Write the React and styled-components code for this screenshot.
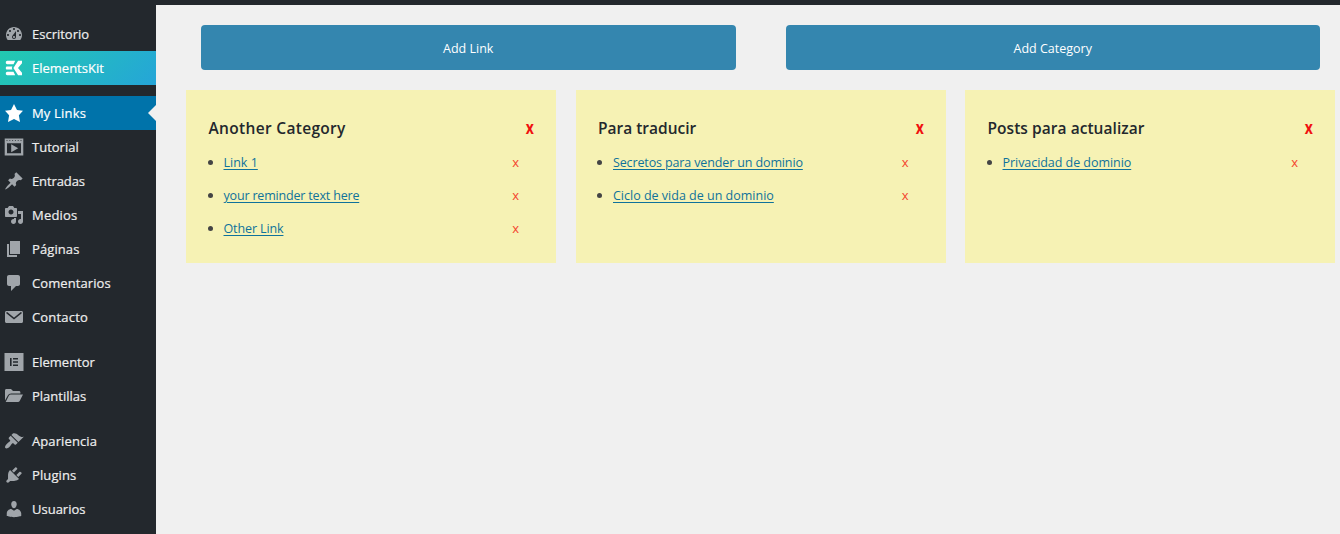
import React from "react";
import styled, { createGlobalStyle } from "styled-components";

const GlobalStyle = createGlobalStyle`
  *, *::before, *::after { box-sizing: border-box; }
  html, body { margin: 0; padding: 0; }
  body {
    background: #f0f0f0;
    color: #3c434a;
    font-family: "Segoe UI", "Open Sans", "Noto Sans", sans-serif;
    font-size: 13px;
    overflow: hidden;
  }
`;

const Page = styled.div`
  display: flex;
  flex-direction: column;
  height: 534px;
  overflow: hidden;
`;

const TopBar = styled.div`
  flex: none;
  height: 5px;
  background: #23282d;
`;

const Body = styled.div`
  flex: 1;
  display: flex;
  min-height: 0;
`;

const Sidebar = styled.nav`
  flex: none;
  width: 156px;
  padding-top: 12px;
  background: #23282d;
  overflow: hidden;
`;

const MenuItem = styled.a`
  display: flex;
  align-items: center;
  position: relative;
  height: 34px;
  margin-top: ${(p) => (p.$spaced ? "11px" : "0")};
  padding-left: 4px;
  gap: 8px;
  color: ${(p) => (p.$tone ? "#fff" : "#eee")};
  background: ${(p) =>
    p.$tone === "kit"
      ? "linear-gradient(135deg, #22cab0 0%, #25a5d8 100%)"
      : p.$tone === "current"
      ? "#0073aa"
      : "transparent"};
  font-size: 13px;
  line-height: 18px;
  text-decoration: none;

  svg {
    flex: none;
    width: 20px;
    height: 20px;
    fill: ${(p) => (p.$tone ? "#fff" : "#a0a5aa")};
  }
`;

const MenuLabel = styled.span`
  letter-spacing: ${(p) => p.$tracking || 0}px;
  white-space: nowrap;
  -webkit-text-stroke: 0.2px currentColor;
`;

const Pointer = styled.span`
  position: absolute;
  right: 0;
  top: 9px;
  border: 8px solid transparent;
  border-left-width: 0;
  border-right-color: #f0f0f0;
`;

const Content = styled.main`
  flex: 1;
  min-width: 0;
  padding: 20px 5px 0 30px;
`;

const Actions = styled.div`
  display: flex;
  gap: 50px;
  padding: 0 15px;
`;

const ActionButton = styled.button`
  flex: 1;
  height: 45px;
  padding: 1px 0 0;
  border: 0;
  border-radius: 4px;
  background: #3486af;
  color: #fff;
  font: inherit;
  font-size: 12.5px;
`;

const Cards = styled.div`
  display: grid;
  grid-template-columns: repeat(3, 370px);
  justify-content: space-between;
  margin-top: 20px;
`;

const Card = styled.section`
  height: 173px;
  padding: 26px 22px 0 22.5px;
  background: #f6f2b4;
`;

const CardHeader = styled.header`
  display: flex;
  align-items: center;
  justify-content: space-between;
  height: 24px;
`;

const CardTitle = styled.h2`
  margin: 0;
  color: #23282d;
  font-size: 15.5px;
  font-weight: 600;
  line-height: 24px;
  letter-spacing: ${(p) => p.$tracking || 0}px;
`;

const RemoveCategory = styled.span`
  color: #f01010;
  font-size: 17px;
  font-weight: 700;
  line-height: 24px;
  transform: scaleX(0.82);
  transform-origin: right center;
`;

const LinkList = styled.ul`
  margin: 10px 0 0;
  padding: 0 15px 0 0;
  list-style: none;
`;

const LinkRow = styled.li`
  display: flex;
  align-items: center;
  height: 25px;
  margin-bottom: 8px;

  &::before {
    content: "";
    width: 5px;
    height: 5px;
    margin-right: 11px;
    margin-left: -1px;
    border-radius: 50%;
    background: #444;
  }
`;

const TextLink = styled.a`
  flex: none;
  color: #0f729b;
  font-size: 12.5px;
  text-decoration: underline;
  text-underline-offset: 2px;
  text-decoration-thickness: 1px;
  letter-spacing: ${(p) => p.$tracking || 0}px;
`;

const RemoveLink = styled.span`
  margin-left: auto;
  padding-bottom: 2px;
  color: #f4442e;
  font-size: 13px;
`;

const ICONS = {
  dashboard: (
    <path d="M3.76 16h12.48c1.1-1.37 1.76-3.11 1.76-5 0-4.42-3.58-8-8-8s-8 3.58-8 8c0 1.89.66 3.63 1.76 5zM10 4c.55 0 1 .45 1 1s-.45 1-1 1-1-.45-1-1 .45-1 1-1zM6 6c.55 0 1 .45 1 1s-.45 1-1 1-1-.45-1-1 .45-1 1-1zm8 0c.55 0 1 .45 1 1s-.45 1-1 1-1-.45-1-1 .45-1 1-1zm-5.37 5.55L12 7v6c0 1.1-.9 2-2 2s-2-.9-2-2c0-.57.24-1.08.63-1.45zM4 10c.55 0 1 .45 1 1s-.45 1-1 1-1-.45-1-1 .45-1 1-1zm12 0c.55 0 1 .45 1 1s-.45 1-1 1-1-.45-1-1 .45-1 1-1zm-5 3c0-.55-.45-1-1-1s-1 .45-1 1 .45 1 1 1 1-.45 1-1z" />
  ),
  kit: (
    <path d="M3.300 2.800H11.200L9.500 6.200H3.300C2.400 6.200 1.800 5.500 1.800 4.500S2.400 2.800 3.300 2.800zM3 8.400h5.400L7.800 10l.6 1.600H3c-.7 0-1.200-.7-1.200-1.600S2.300 8.400 3 8.400zM3.300 13.800h6.200l1.700 3.400H3.300c-.9 0-1.500-.7-1.500-1.700s.6-1.700 1.500-1.700zM14.100 2.800H18v2.400L14 10l4 4.800v2.400h-3.900L9.400 10z" />
  ),
  star: <path d="M10 1l3 6 6 .75-4.120 4.620L16 19l-6-3-6 3 1.130-6.630L1 7.750 7 7z" />,
  video: (
    <path
      fillRule="evenodd"
      d="M.7 1.500h18.600v17H.7zM3 6.200v10h14v-10zM2.500 3.200v.8h1v-.8zM5.300 3.200v.8h1v-.8zM8.100 3.200v.8h1v-.8zM10.900 3.200v.8h1v-.8zM13.700 3.200v.8h1v-.8zM16.500 3.200v.8h1v-.8zM7.200 7.200l7 4-7 4z"
    />
  ),
  pin: (
    <path d="M10.440 3.020l1.820-1.820 6.360 6.350-1.830 1.820c-1.050-.68-2.480-.57-3.410.36l-.75.75c-.92.93-1.040 2.350-.35 3.410l-1.830 1.820-2.410-2.410-2.800 2.790c-.42.42-3.380 2.710-3.800 2.290s1.860-3.390 2.280-3.810l2.790-2.790L4.100 9.360l1.830-1.820c1.050.69 2.480.57 3.400-.36l.75-.75c.93-.92 1.050-2.350.36-3.410z" />
  ),
  media: (
    <path d="M13 11V4c0-.55-.45-1-1-1h-1.670L9 1H5L3.670 3H2c-.55 0-1 .45-1 1v7c0 .55.45 1 1 1h10c.55 0 1-.45 1-1zM7 4.500c1.380 0 2.500 1.120 2.500 2.500S8.380 9.500 7 9.500 4.500 8.380 4.500 7 5.620 4.500 7 4.500zM14 6h5v10.500c0 1.380-1.120 2.500-2.500 2.500S14 17.880 14 16.500s1.120-2.500 2.500-2.500c.17 0 .34.02.5.05V9h-3V6zm-4 8.050V13h2v3.500c0 1.380-1.120 2.500-2.500 2.500S7 17.880 7 16.500 8.120 14 9.500 14c.17 0 .34.02.5.05z" />
  ),
  pages: <path d="M6 15V2h10v13H6zm-1 1h8v2H3V5h2v11z" />,
  comments: (
    <path d="M5 2h9c1.100 0 2 .9 2 2v7c0 1.100-.9 2-2 2h-2l-5 5v-5H5c-1.100 0-2-.9-2-2V4c0-1.100.9-2 2-2z" />
  ),
  mail: (
    <>
      <path d="M2.500 4h15c.83 0 1.500.67 1.500 1.500v9c0 .83-.67 1.500-1.500 1.500h-15c-.83 0-1.500-.67-1.500-1.500v-9C1 4.670 1.670 4 2.500 4z" />
      <path d="M3 5.900l7 5.700 7-5.700" style={{ fill: "none" }} stroke="#23282d" strokeWidth="1.500" strokeLinecap="round" />
    </>
  ),
  elementor: (
    <path
      fillRule="evenodd"
      d="M.5 1h19v18H.5zM6 6v8h1.600V6zM9 6v1.600h5V6zM9 9.200v1.600h5V9.200zM9 12.400V14h5v-1.600z"
    />
  ),
  folder: (
    <path d="M1 14.500V4.500C1 3.700 1.600 3 2.400 3H7l2 2h6c.8 0 1.400.6 1.400 1.400V7.500H7.200c-1.600 0-2.700.7-3.400 2zM1.700 16l3.100-6.200c.4-.8 1-1.200 1.900-1.200H19l-3.200 6.200c-.4.800-1 1.200-1.900 1.200z" />
  ),
  brush: (
    <path d="M14.480 11.060L7.410 3.990l1.500-1.500c.5-.56 2.300-.47 3.510.32 1.210.8 1.430 1.280 2.910 2.100 1.180.64 2.450 1.260 4.450.85zm-.71.71L6.700 4.700 4.930 6.470c-.39.39-.39 1.020 0 1.410l1.060 1.060c.39.39.39 1.030 0 1.420-.6.6-1.430 1.110-2.210 1.690-.35.26-.7.53-1.010.84C1.430 14.230.4 16.080 1.400 17.070c.99 1 2.840-.03 4.180-1.360.31-.31.58-.66.85-1.020.57-.78 1.080-1.610 1.690-2.210.39-.39 1.020-.39 1.410 0l1.060 1.060c.39.39 1.020.39 1.410 0z" />
  ),
  plug: (
    <path d="M13.110 4.360L9.870 7.600 8 5.730l3.240-3.240c.35-.34 1.050-.2 1.560.32.52.51.66 1.210.31 1.550zm-8 1.770l.91-1.120 9.010 9.010-1.190.84c-.71.71-2.630 1.160-3.820 1.160H6.140L4.900 17.260c-.59.59-1.540.59-2.120 0-.59-.58-.59-1.530 0-2.120l1.240-1.240v-3.880c0-1.130.4-3.190 1.090-3.890zm7.260 3.970l3.240-3.240c.34-.35 1.040-.21 1.550.31.52.51.66 1.210.31 1.550l-3.240 3.250z" />
  ),
  user: (
    <path d="M10 9.250c-2.270 0-2.730-3.440-2.730-3.440C7 4.020 7.820 2 9.970 2c2.160 0 2.980 2.020 2.710 3.810 0 0-.41 3.440-2.680 3.440zm0 2.570L12.720 10c2.390 0 4.520 2.330 4.520 4.530v2.490s-3.650 1.130-7.240 1.130c-3.650 0-7.240-1.130-7.240-1.130v-2.490c0-2.250 1.940-4.480 4.470-4.480z" />
  ),
};

const MENU = [
  { label: "Escritorio", icon: "dashboard" },
  { label: "ElementsKit", icon: "kit", tone: "kit" },
  { label: "My Links", icon: "star", tone: "current", spaced: true, tracking: 0.18 },
  { label: "Tutorial", icon: "video" },
  { label: "Entradas", icon: "pin", tracking: -0.1 },
  { label: "Medios", icon: "media", tracking: 0.2 },
  { label: "Páginas", icon: "pages", tracking: 0.1 },
  { label: "Comentarios", icon: "comments", tracking: 0.08 },
  { label: "Contacto", icon: "mail", tracking: 0.18 },
  { label: "Elementor", icon: "elementor", spaced: true },
  { label: "Plantillas", icon: "folder" },
  { label: "Apariencia", icon: "brush", spaced: true, tracking: 0.1 },
  { label: "Plugins", icon: "plug", tracking: 0.12 },
  { label: "Usuarios", icon: "user" },
];

const CATEGORIES = [
  {
    title: "Another Category",
    tracking: 0.32,
    links: [
      { text: "Link 1" },
      { text: "your reminder text here", tracking: -0.18 },
      { text: "Other Link", tracking: -0.12 },
    ],
  },
  {
    title: "Para traducir",
    links: [
      { text: "Secretos para vender un dominio", tracking: -0.13 },
      { text: "Ciclo de vida de un dominio" },
    ],
  },
  {
    title: "Posts para actualizar",
    tracking: 0.05,
    links: [{ text: "Privacidad de dominio", tracking: -0.05 }],
  },
];

export default function App() {
  return (
    <>
      <GlobalStyle />
      <Page>
        <TopBar />
        <Body>
          <Sidebar>
            {MENU.map((m) => (
              <MenuItem key={m.label} $tone={m.tone} $spaced={m.spaced}>
                <svg viewBox="0 0 20 20">{ICONS[m.icon]}</svg>
                <MenuLabel $tracking={m.tracking}>{m.label}</MenuLabel>
                {m.tone === "current" && <Pointer />}
              </MenuItem>
            ))}
          </Sidebar>
          <Content>
            <Actions>
              <ActionButton>Add Link</ActionButton>
              <ActionButton>Add Category</ActionButton>
            </Actions>
            <Cards>
              {CATEGORIES.map((c) => (
                <Card key={c.title}>
                  <CardHeader>
                    <CardTitle $tracking={c.tracking}>{c.title}</CardTitle>
                    <RemoveCategory>x</RemoveCategory>
                  </CardHeader>
                  <LinkList>
                    {c.links.map((l) => (
                      <LinkRow key={l.text}>
                        <TextLink $tracking={l.tracking}>{l.text}</TextLink>
                        <RemoveLink>x</RemoveLink>
                      </LinkRow>
                    ))}
                  </LinkList>
                </Card>
              ))}
            </Cards>
          </Content>
        </Body>
      </Page>
    </>
  );
}
